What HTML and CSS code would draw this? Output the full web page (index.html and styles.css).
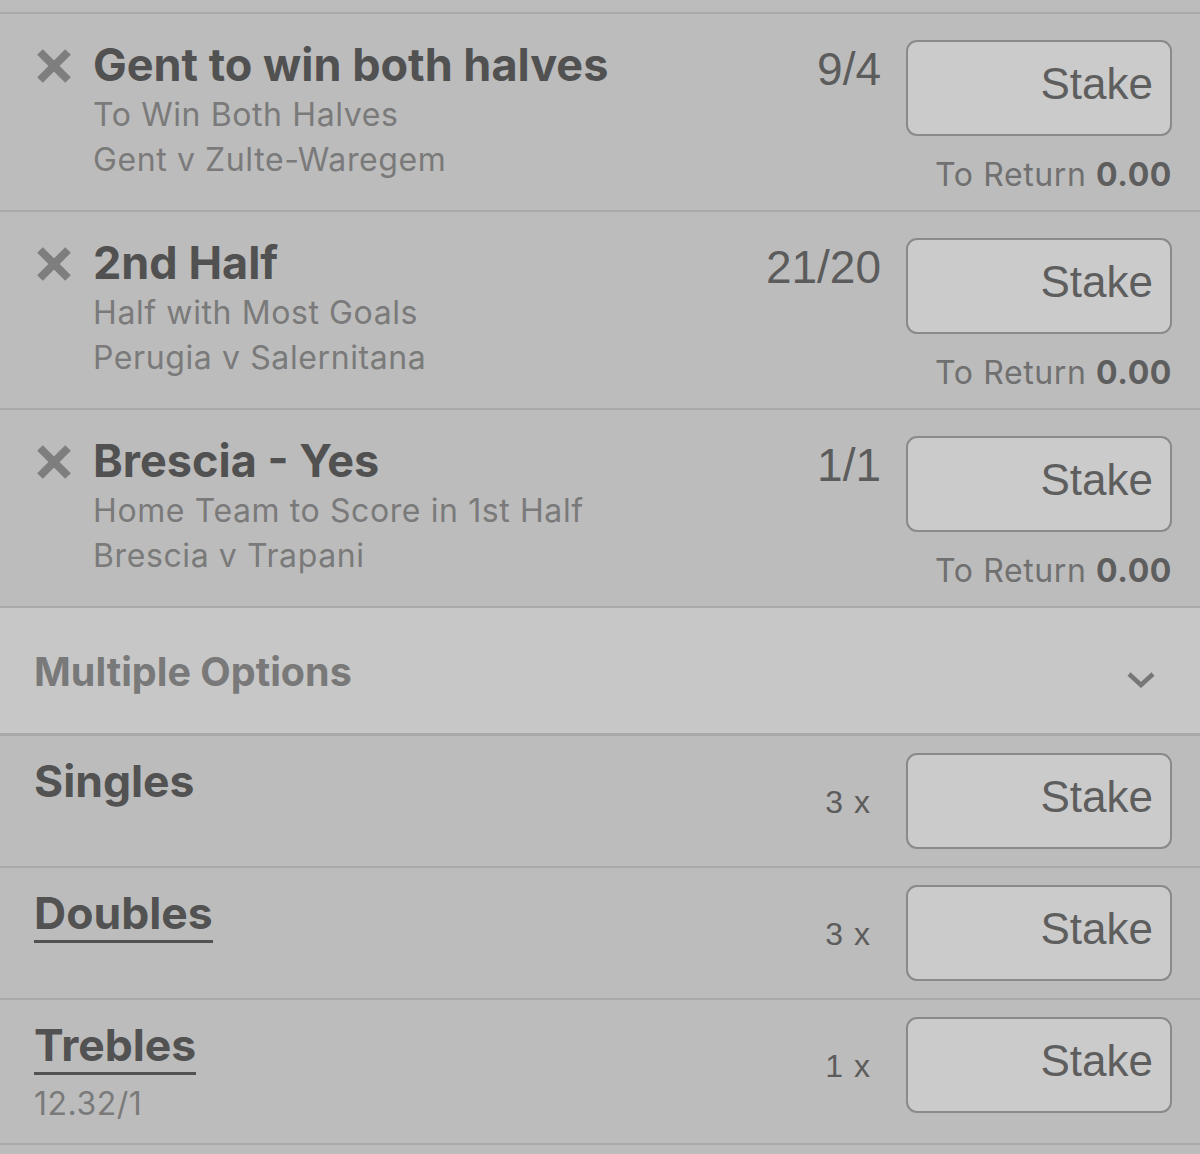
FILE: index.html
```html
<!DOCTYPE html>
<html>
<head>
<meta charset="utf-8">
<link rel="stylesheet" href="styles.css">
</head>
<body>
<div class="slip">
  <div class="top-gap"></div>

  <div class="bet">
    <div class="remove"><svg viewBox="0 0 36 36" width="36" height="36"><path d="M4 4 L32 32 M32 4 L4 32" stroke="#7e7e7e" stroke-width="8" stroke-linecap="butt"/></svg></div>
    <div class="info">
      <div class="title">Gent to win both halves</div>
      <div class="market">To Win Both Halves</div>
      <div class="event">Gent v Zulte-Waregem</div>
    </div>
    <div class="odds">9/4</div>
    <div class="stake-col">
      <div class="stake">Stake</div>
      <div class="return">To Return <b>0.00</b></div>
    </div>
  </div>

  <div class="bet">
    <div class="remove"><svg viewBox="0 0 36 36" width="36" height="36"><path d="M4 4 L32 32 M32 4 L4 32" stroke="#7e7e7e" stroke-width="8" stroke-linecap="butt"/></svg></div>
    <div class="info">
      <div class="title">2nd Half</div>
      <div class="market">Half with Most Goals</div>
      <div class="event">Perugia v Salernitana</div>
    </div>
    <div class="odds">21/20</div>
    <div class="stake-col">
      <div class="stake">Stake</div>
      <div class="return">To Return <b>0.00</b></div>
    </div>
  </div>

  <div class="bet">
    <div class="remove"><svg viewBox="0 0 36 36" width="36" height="36"><path d="M4 4 L32 32 M32 4 L4 32" stroke="#7e7e7e" stroke-width="8" stroke-linecap="butt"/></svg></div>
    <div class="info">
      <div class="title">Brescia - Yes</div>
      <div class="market">Home Team to Score in 1st Half</div>
      <div class="event">Brescia v Trapani</div>
    </div>
    <div class="odds">1/1</div>
    <div class="stake-col">
      <div class="stake">Stake</div>
      <div class="return">To Return <b>0.00</b></div>
    </div>
  </div>

  <div class="multi-head">
    <span class="multi-title">Multiple Options</span>
    <svg class="chevron" viewBox="0 0 28 16" width="28" height="16"><path d="M2 2 L14 13 L26 2" fill="none" stroke="#777" stroke-width="4.5"/></svg>
  </div>

  <div class="multi">
    <div class="multi-info">
      <div class="multi-name">Singles</div>
    </div>
    <div class="count">3 x</div>
    <div class="stake">Stake</div>
  </div>

  <div class="multi">
    <div class="multi-info">
      <div class="multi-name link">Doubles</div>
    </div>
    <div class="count">3 x</div>
    <div class="stake">Stake</div>
  </div>

  <div class="multi tall">
    <div class="multi-info">
      <div class="multi-name link">Trebles</div>
      <div class="multi-odds">12.32/1</div>
    </div>
    <div class="count">1 x</div>
    <div class="stake">Stake</div>
  </div>
</div>
</body>
</html>
```

FILE: styles.css
```css
html, body {
  margin: 0;
  padding: 0;
  background: #bcbcbc;
}

.slip {
  width: 1200px;
  font-family: Inter, Roboto, "Liberation Sans", sans-serif;
  color: #525252;
}

.top-gap {
  height: 12px;
  border-bottom: 2px solid #a9a9a9;
}

.bet {
  display: flex;
  align-items: flex-start;
  box-sizing: border-box;
  height: 198px;
  padding: 26px 28px 0 36px;
  border-bottom: 2px solid #a9a9a9;
}

.remove {
  width: 36px;
  height: 36px;
  margin-top: 8px;
}

.remove svg {
  display: block;
}

.info {
  flex: 1;
  margin-left: 21px;
}

.title {
  font-size: 45px;
  font-weight: 700;
  line-height: 50px;
  color: #515151;
}

.market,
.event {
  font-size: 32px;
  line-height: 45px;
  letter-spacing: 0.6px;
  color: #7a7a7a;
}

.market {
  margin-top: 2px;
}

.odds {
  font-family: "Liberation Sans", Arial, sans-serif;
  font-size: 46px;
  line-height: 44px;
  margin-top: 7px;
  margin-right: 25px;
  color: #5c5c5c;
}

.stake-col {
  width: 266px;
  display: flex;
  flex-direction: column;
  align-items: flex-end;
}

.stake {
  box-sizing: border-box;
  width: 266px;
  height: 96px;
  border: 2px solid #8a8a8a;
  border-radius: 11px;
  background: #cbcbcb;
  display: flex;
  align-items: center;
  justify-content: flex-end;
  padding: 0 17px 8px 0;
  font-family: "Liberation Sans", Arial, sans-serif;
  font-size: 44px;
  color: #5e5e5e;
}

.return {
  margin-top: 19px;
  font-size: 32px;
  line-height: 40px;
  letter-spacing: 0.6px;
  color: #707070;
}

.return b {
  font-weight: 700;
  color: #5e5e5e;
}

.multi-head {
  display: flex;
  align-items: center;
  justify-content: space-between;
  box-sizing: border-box;
  height: 128px;
  padding: 0 45px 0 34px;
  background: #c7c7c7;
  border-bottom: 3px solid #a9a9a9;
}

.multi-title {
  font-size: 39.5px;
  font-weight: 700;
  color: #797979;
  margin-top: 2px;
}

.chevron {
  display: block;
  margin-top: 18px;
}

.multi {
  display: flex;
  align-items: flex-start;
  box-sizing: border-box;
  height: 132px;
  padding: 17px 28px 0 34px;
  border-bottom: 2px solid #a9a9a9;
}

.multi.tall {
  height: 145px;
}

.multi-info {
  flex: 1;
}

.multi-name {
  display: inline-block;
  font-size: 44.5px;
  font-weight: 700;
  line-height: 50px;
  margin-top: 3px;
  color: #525252;
}

.multi-name.link {
  border-bottom: 3px solid #525252;
  padding-bottom: 4px;
  line-height: 46px;
  margin-top: 5px;
}

.multi-odds {
  font-size: 32px;
  line-height: 40px;
  letter-spacing: 0.5px;
  color: #7a7a7a;
  margin-top: 9px;
}

.count {
  font-family: "Liberation Sans", Arial, sans-serif;
  font-size: 32px;
  line-height: 40px;
  letter-spacing: 1px;
  margin-top: 29px;
  margin-right: 35px;
  color: #5c5c5c;
}
```
